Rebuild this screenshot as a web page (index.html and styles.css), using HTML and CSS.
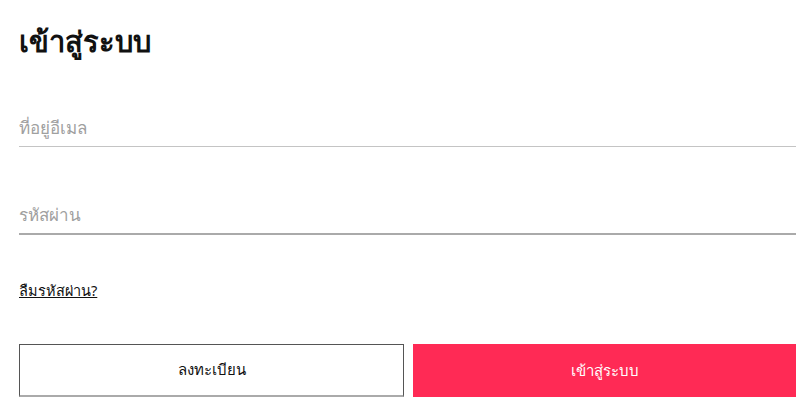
FILE: index.html
```html
<!DOCTYPE html>
<html lang="th">
<head>
<meta charset="utf-8">
<link rel="stylesheet" href="styles.css">
</head>
<body>
<div class="page">
  <h1 class="title">เข้าสู่ระบบ</h1>
  <div class="field">
    <div class="placeholder">ที่อยู่อีเมล</div>
  </div>
  <div class="field field-active">
    <div class="placeholder">รหัสผ่าน</div>
  </div>
  <a class="forgot" href="#">ลืมรหัสผ่าน?</a>
  <div class="actions">
    <div class="btn btn-outline">ลงทะเบียน</div>
    <div class="btn btn-primary">เข้าสู่ระบบ</div>
  </div>
</div>
</body>
</html>
```
FILE: styles.css
```css
html, body {
  margin: 0;
  padding: 0;
  background: #fff;
}
body {
  font-family: "Noto Sans", "DejaVu Sans", sans-serif;
  color: #111;
}
.page {
  padding: 20px 4px 0 19px;
  display: flex;
  flex-direction: column;
}
.title {
  margin: 0;
  font-size: 29px;
  font-weight: 600;
  line-height: 42px;
  color: #111;
}
.field {
  margin-top: 42px;
  height: 42px;
  border-bottom: 1px solid #c4c4c4;
  display: flex;
  align-items: center;
}
.field + .field {
  margin-top: 44px;
}
.field-active {
  border-bottom: 2px solid #aaa;
}
.placeholder {
  font-size: 17px;
  color: #a0a0a0;
  padding-top: 4px;
}
.forgot {
  margin-top: 44px;
  align-self: flex-start;
  font-size: 14.5px;
  color: #111;
  text-decoration: underline;
}
.actions {
  margin-top: 42px;
  display: flex;
  gap: 9px;
}
.btn {
  flex: 1;
  height: 53px;
  box-sizing: border-box;
  display: flex;
  align-items: center;
  justify-content: center;
  font-size: 15px;
}
.btn-outline {
  border: 1px solid #555;
  border-bottom: 2px solid #aaa;
  color: #111;
}
.btn-primary {
  background: #ff2a55;
  color: #fff;
}
```
